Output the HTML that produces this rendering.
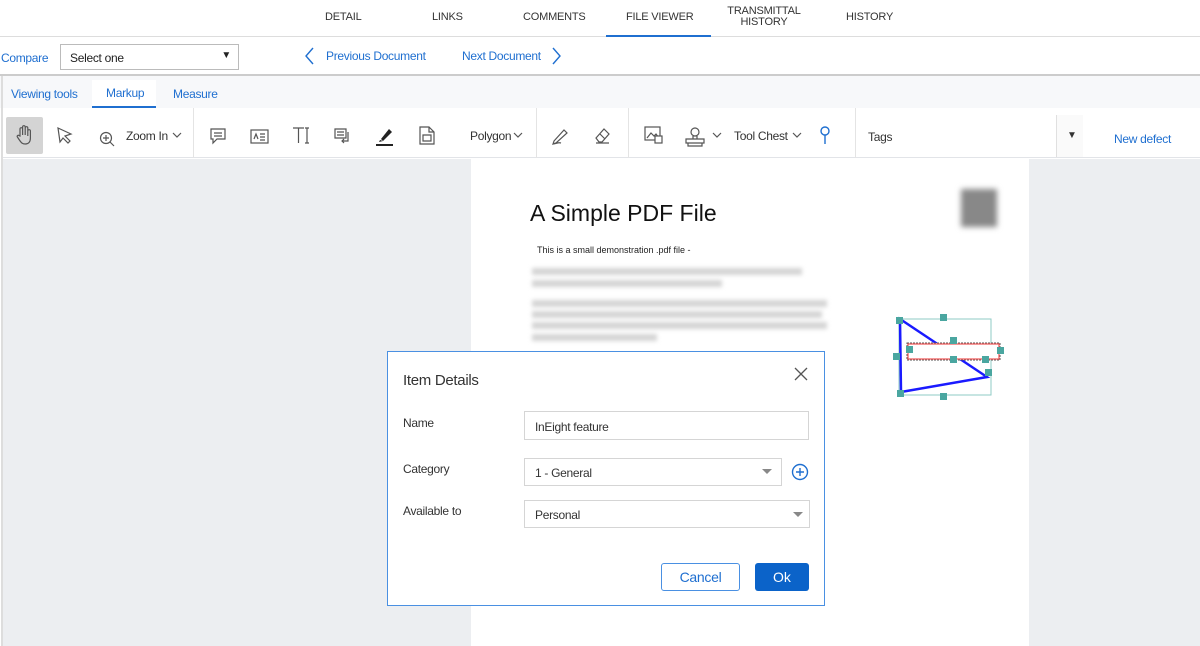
<!DOCTYPE html>
<html><head><style>
*{box-sizing:border-box;margin:0;padding:0}
body{width:1200px;height:646px;overflow:hidden;font-family:"Liberation Sans",sans-serif;background:#fff;position:relative;font-size:12px;color:#333}
.a{position:absolute}
.nav{font-size:11px;color:#333;text-align:center;letter-spacing:-0.2px}
.blue{color:#1f6fd0}
.ic{position:absolute;stroke:#555;fill:none;stroke-width:1.2}
.blur{position:absolute;background:#d4d4d4;filter:blur(2px);height:7px}
.h{position:absolute;width:7px;height:7px;background:#4aa6a0}
.t{letter-spacing:-0.3px}
</style></head><body>
<!-- top nav -->
<div class="a nav" style="left:325px;top:11px">DETAIL</div>
<div class="a nav" style="left:432px;top:11px">LINKS</div>
<div class="a nav" style="left:523px;top:11px">COMMENTS</div>
<div class="a nav" style="left:626px;top:11px">FILE VIEWER</div>
<div class="a nav" style="left:720px;top:6px;width:88px;line-height:11px">TRANSMITTAL<br>HISTORY</div>
<div class="a nav" style="left:846px;top:11px">HISTORY</div>
<div class="a" style="left:0;top:36px;width:1200px;height:1px;background:#ddd"></div>
<div class="a" style="left:606px;top:35px;width:105px;height:2px;background:#1f6fd0"></div>
<!-- compare row -->
<div class="a blue t" style="left:1px;top:51px">Compare</div>
<div class="a t" style="left:60px;top:44px;width:179px;height:26px;border:1px solid #bbb;padding:6px 9px;color:#222">Select one<span style="position:absolute;right:7px;top:5px;font-size:10px">▼</span></div>
<svg class="a" style="left:302px;top:46px" width="14" height="20"><path d="M11 2 L4 10 L11 18" stroke="#1f6fd0" fill="none" stroke-width="1.4"/></svg>
<div class="a blue t" style="left:326px;top:49px">Previous Document</div>
<div class="a blue t" style="left:462px;top:49px">Next Document</div>
<svg class="a" style="left:550px;top:46px" width="14" height="20"><path d="M3 2 L10 10 L3 18" stroke="#1f6fd0" fill="none" stroke-width="1.4"/></svg>
<div class="a" style="left:0;top:74px;width:1200px;height:2px;background:#ccc"></div>
<!-- tab row -->
<div class="a" style="left:0;top:76px;width:1200px;height:32px;background:#f7f8fa"></div>
<div class="a" style="left:1px;top:76px;width:2px;height:570px;background:#ddd"></div>
<div class="a blue t" style="left:11px;top:87px">Viewing tools</div>
<div class="a blue t" style="left:92px;top:80px;height:28px;width:64px;background:#fff;border-bottom:2px solid #1f6fd0;padding:6px 0 0 14px">Markup</div>
<div class="a blue t" style="left:173px;top:87px">Measure</div>
<!-- toolbar -->
<div class="a" style="left:3px;top:108px;width:1197px;height:50px;background:#fff;border-bottom:1px solid #e2e4e8"></div>
<div class="a" style="left:6px;top:117px;width:37px;height:37px;background:#d4d4d4;border-radius:2px"></div>
<svg class="ic" style="left:14px;top:124px" width="20" height="22"><path d="M6 12V5a1.3 1.3 0 0 1 2.6 0v6V3a1.3 1.3 0 0 1 2.6 0v8V4a1.3 1.3 0 0 1 2.6 0v8V7a1.3 1.3 0 0 1 2.6 0v7c0 4-2 6-5 6s-4-1-6-4l-2-3c-.8-1.3.8-2.3 1.8-1.3z"/></svg>
<svg class="ic" style="left:56px;top:126px" width="18" height="18"><path d="M2 2 L15 8 L9 10 L14 15 L12 17 L7 12 L4 16 Z"/></svg>
<svg class="ic" style="left:99px;top:131px" width="16" height="16"><circle cx="7" cy="7" r="5.5"/><path d="M7 4v6M4 7h6M11 11l4 4"/></svg>
<div class="a t" style="left:126px;top:129px;color:#333">Zoom In</div>
<svg class="ic" style="left:172px;top:132px" width="10" height="7"><path d="M1 1l4 4 4-4"/></svg>
<div class="a" style="left:193px;top:108px;width:1px;height:50px;background:#e4e4e4"></div>
<svg class="ic" style="left:209px;top:127px" width="18" height="18"><path d="M2 2h14v10H8l-4 4v-4H2z M5 6h8M5 9h8"/></svg>
<svg class="ic" style="left:250px;top:129px" width="19" height="15"><rect x="1" y="1" width="17" height="13"/><path d="M4 10l2-5 2 5M10 5h5M10 8h5M10 11h5"/></svg>
<svg class="ic" style="left:292px;top:126px" width="20" height="18"><path d="M1 2h11M6.5 2v15M15 2v15M13 2h4M13 17h4"/></svg>
<svg class="ic" style="left:333px;top:127px" width="19" height="18"><path d="M2 2h11v9H2z M4 5h7M4 8h7M15 5v9H9 M11 12l-2 2 2 2"/></svg>
<svg class="a" style="left:373px;top:125px" width="22" height="22"><path d="M8 14l8-10 3 3-9 9z" fill="#222"/><path d="M7 15l3 1-4 1z" fill="#222"/><rect x="3" y="19" width="17" height="2" fill="#222"/></svg>
<svg class="ic" style="left:419px;top:126px" width="16" height="19"><path d="M1 1h9l5 5v12H1z M10 1v5h5 M4 9h8v6H4z"/></svg>
<div class="a t" style="left:470px;top:129px">Polygon</div>
<svg class="ic" style="left:513px;top:132px" width="10" height="7"><path d="M1 1l4 4 4-4"/></svg>
<div class="a" style="left:536px;top:108px;width:1px;height:50px;background:#e4e4e4"></div>
<svg class="ic" style="left:551px;top:126px" width="20" height="20"><path d="M3 15l10-11 3 3-11 10-3 1z M2 18c3 0 5-2 8-1"/></svg>
<svg class="ic" style="left:593px;top:126px" width="18" height="18"><path d="M3 12l8-9 5 5-7 8H6z M7 8l5 5 M3 17h13"/></svg>
<div class="a" style="left:628px;top:108px;width:1px;height:50px;background:#e4e4e4"></div>
<svg class="ic" style="left:644px;top:126px" width="20" height="19"><rect x="1" y="1" width="15" height="13"/><path d="M3 12l4-5 3 3 2-2 3 4"/><rect x="11" y="10" width="7" height="7" fill="#fff"/></svg>
<svg class="ic" style="left:684px;top:126px" width="22" height="24"><circle cx="11" cy="6" r="4"/><path d="M9 10v3h4v-3 M2 13h18v4H2z M4 17v3h14v-3"/></svg>
<svg class="ic" style="left:712px;top:132px" width="10" height="7"><path d="M1 1l4 4 4-4"/></svg>
<div class="a t" style="left:734px;top:129px">Tool Chest</div>
<svg class="ic" style="left:792px;top:132px" width="10" height="7"><path d="M1 1l4 4 4-4"/></svg>
<svg class="a" style="left:818px;top:125px" width="14" height="20"><circle cx="7" cy="6" r="4" stroke="#1f6fd0" fill="none" stroke-width="1.4"/><path d="M7 10v9" stroke="#1f6fd0" stroke-width="1.4"/></svg>
<div class="a" style="left:855px;top:108px;width:1px;height:50px;background:#e4e4e4"></div>
<div class="a t" style="left:868px;top:130px">Tags</div>
<div class="a" style="left:1056px;top:115px;width:1px;height:42px;background:#e0e0e0"></div>
<div class="a" style="left:1057px;top:115px;width:26px;height:42px;background:#fafafa;font-size:10px;padding:15px 0 0 10px">▼</div>
<div class="a blue t" style="left:1114px;top:132px">New defect</div>
<!-- viewer -->
<div class="a" style="left:3px;top:159px;width:1197px;height:487px;background:#eceef1"></div>
<div class="a" style="left:471px;top:159px;width:558px;height:487px;background:#fff"></div>
<div class="a" style="left:530px;top:200px;font-size:23px;color:#111">A Simple PDF File</div>
<div class="a" style="left:961px;top:189px;width:36px;height:38px;background:#888;filter:blur(3px)"></div>
<div class="a" style="left:537px;top:245px;font-size:9px;color:#222">This is a small demonstration .pdf file -</div>
<div class="blur" style="left:532px;top:268px;width:270px"></div>
<div class="blur" style="left:532px;top:280px;width:190px"></div>
<div class="blur" style="left:532px;top:300px;width:295px"></div>
<div class="blur" style="left:532px;top:311px;width:290px"></div>
<div class="blur" style="left:532px;top:322px;width:295px"></div>
<div class="blur" style="left:532px;top:334px;width:125px"></div>
<!-- annotation -->
<svg class="a" style="left:893px;top:314px" width="112" height="86">
<rect x="6" y="5" width="92" height="76" stroke="#8fcbc6" fill="none"/>
<path d="M7 5 L94 63 L8 78 Z" stroke="#1a1aff" stroke-width="2.5" fill="none"/>
<rect x="14" y="29" width="93" height="17" fill="#fff" stroke="#555" stroke-dasharray="2 1"/>
<rect x="15" y="30" width="91" height="15" fill="none" stroke="#f06060" stroke-width="1.3"/>
</svg>
<div class="h" style="left:896px;top:317px"></div><div class="h" style="left:940px;top:314px"></div>
<div class="h" style="left:950px;top:337px"></div><div class="h" style="left:906px;top:346px"></div>
<div class="h" style="left:997px;top:347px"></div><div class="h" style="left:950px;top:356px"></div>
<div class="h" style="left:985px;top:369px"></div><div class="h" style="left:893px;top:353px"></div>
<div class="h" style="left:897px;top:390px"></div><div class="h" style="left:940px;top:393px"></div>
<div class="h" style="left:982px;top:356px"></div>
<!-- dialog -->
<div class="a" style="left:387px;top:351px;width:438px;height:255px;background:#fff;border:1px solid #4a90e2"></div>
<div class="a t" style="left:403px;top:372px;font-size:15px;color:#333">Item Details</div>
<svg class="a" style="left:794px;top:367px" width="14" height="14"><path d="M1 1l12 12M13 1L1 13" stroke="#555" stroke-width="1.3"/></svg>
<div class="a t" style="left:403px;top:416px">Name</div>
<div class="a t" style="left:403px;top:462px">Category</div>
<div class="a t" style="left:403px;top:504px">Available to</div>
<div class="a t" style="left:524px;top:411px;width:285px;height:29px;border:1px solid #d5d5d5;padding:8px 10px;color:#333">InEight feature</div>
<div class="a t" style="left:524px;top:458px;width:258px;height:28px;border:1px solid #d5d5d5;padding:7px 10px;color:#333">1 - General</div>
<svg class="a" style="left:762px;top:469px" width="10" height="6"><path d="M0 0h10L5 5z" fill="#888"/></svg>
<svg class="a" style="left:791px;top:463px" width="18" height="18"><circle cx="9" cy="9" r="7.5" stroke="#1f6fd0" stroke-width="1.4" fill="none"/><path d="M9 5v8M5 9h8" stroke="#1f6fd0" stroke-width="1.4"/></svg>
<div class="a t" style="left:524px;top:500px;width:286px;height:28px;border:1px solid #d5d5d5;padding:7px 10px;color:#333">Personal</div>
<svg class="a" style="left:793px;top:512px" width="10" height="6"><path d="M0 0h10L5 5z" fill="#888"/></svg>
<div class="a t" style="left:661px;top:563px;width:79px;height:28px;border:1px solid #4a90e2;border-radius:3px;color:#1f6fd0;text-align:center;line-height:26px;font-size:14px">Cancel</div>
<div class="a" style="left:755px;top:563px;width:54px;height:28px;background:#0b63c9;border-radius:3px;color:#fff;text-align:center;line-height:28px;font-size:14px">Ok</div>
</body></html>
